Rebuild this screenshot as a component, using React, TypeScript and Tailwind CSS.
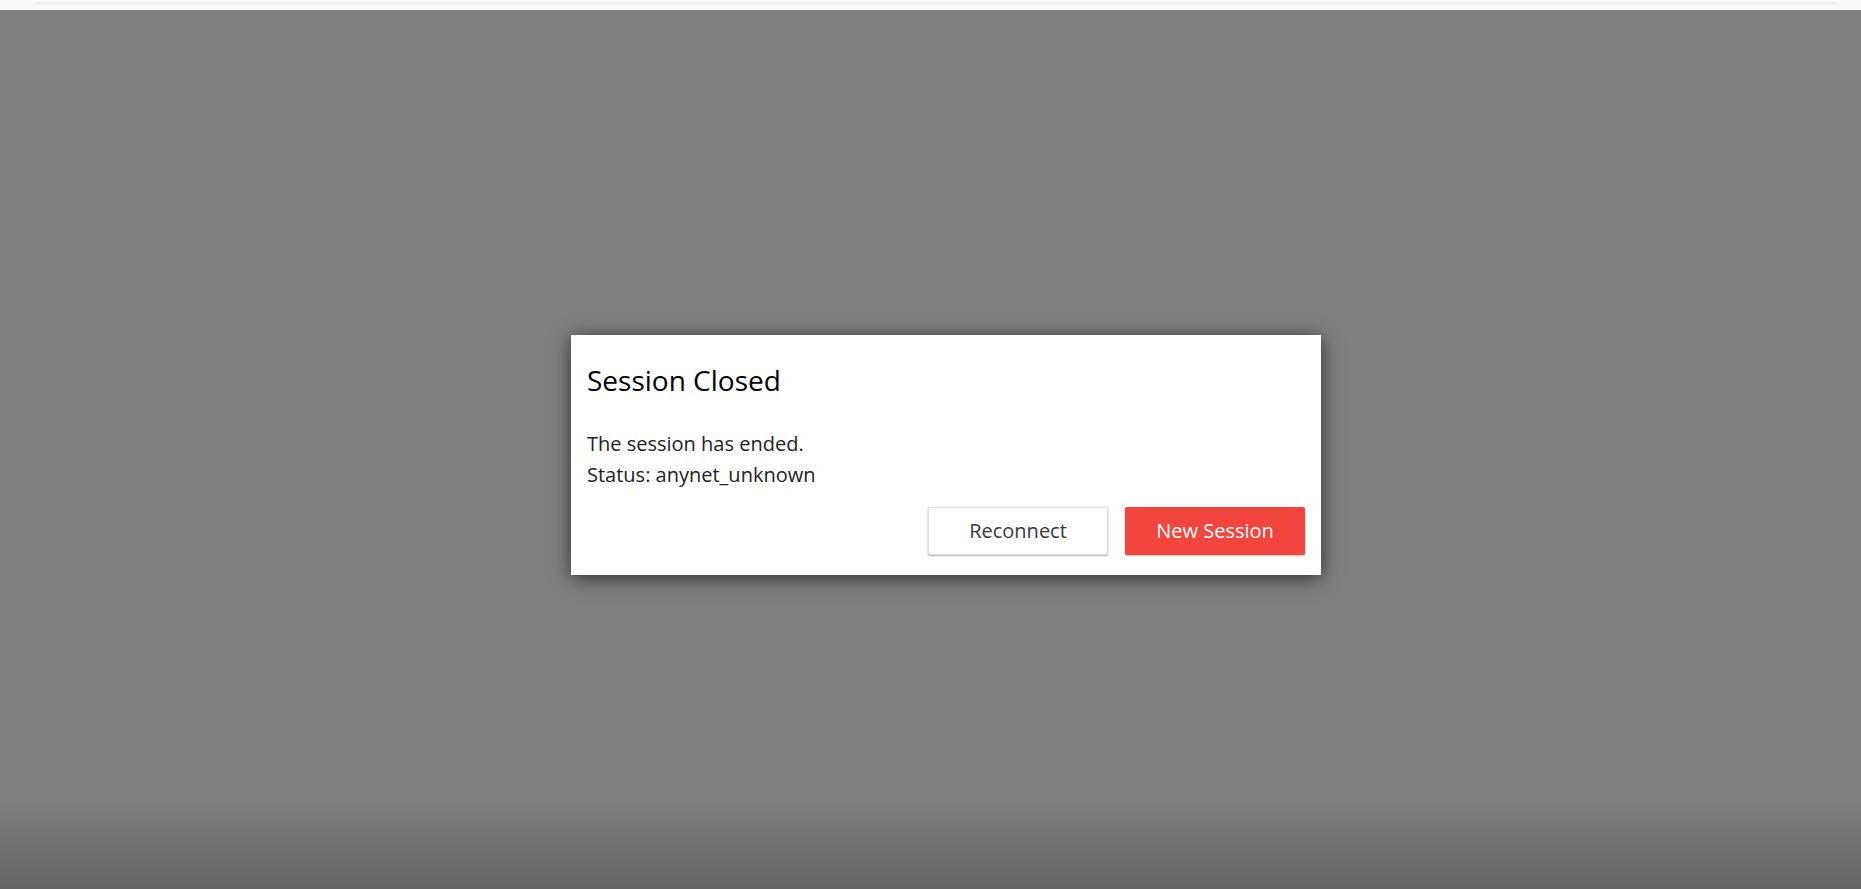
import React from 'react';

const font = { fontFamily: '"Open Sans", "Noto Sans", sans-serif' };

export default function App() {
  return (
    <div className="flex h-screen flex-col overflow-hidden" style={font}>
      {/* browser strip */}
      <div className="h-[10px] shrink-0 bg-[#f9f9f9] pt-[2px]">
        <div className="ml-[34px] mr-[23px] h-[3px] rounded-sm bg-[#eeeeee]" />
      </div>

      <div className="flex flex-1 justify-center bg-[linear-gradient(to_bottom,#808080_0%,#808080_90%,#646464_100%)] pl-[31px] pt-[325px]">
        <div className="h-[240px] w-[750px] bg-white px-4 pt-4 shadow-[0_3px_18px_rgba(0,0,0,0.65)]">
          <h2 className="mt-[11px] text-[28px] leading-[36px] text-black">Session Closed</h2>
          <div className="mt-[30px] text-[20px] leading-[31px] text-[#222]">
            <p>The session has ended.</p>
            <p>Status: anynet_unknown</p>
          </div>
          <div className="mt-[17px] flex justify-end gap-[17px]">
            <button className="h-[48px] w-[180px] rounded-[2px] border border-[#dcdcdc] bg-white text-[20px] font-medium text-[#3a3a3a] shadow-[0_1px_2px_rgba(0,0,0,0.3)]">
              Reconnect
            </button>
            <button className="h-[48px] w-[180px] rounded-[2px] bg-[#f1453d] text-[20px] font-medium text-white shadow-[0_1px_2px_rgba(0,0,0,0.3)]">
              New Session
            </button>
          </div>
        </div>
      </div>
    </div>
  );
}
